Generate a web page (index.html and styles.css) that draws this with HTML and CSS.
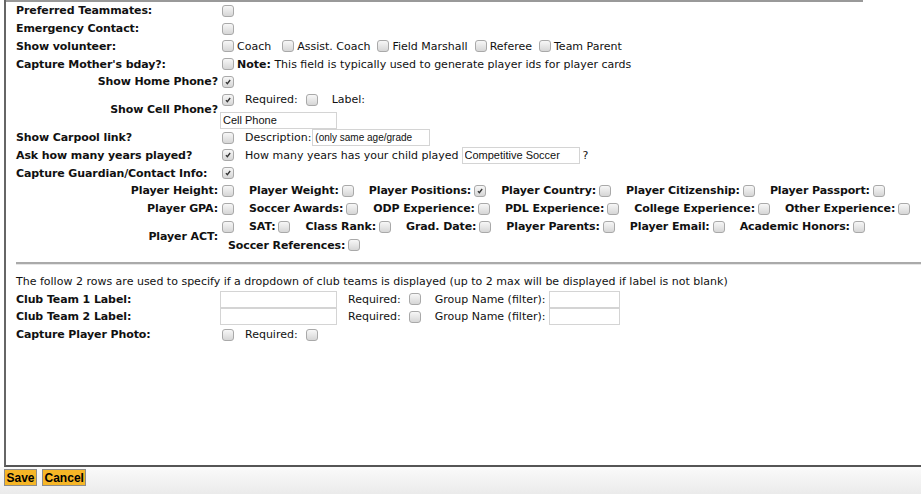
FILE: index.html
```html
<!DOCTYPE html>
<html lang="en">
<head>
    <meta charset="UTF-8">
    <title>Registration Options</title>
    <link rel="stylesheet" href="styles.css">
</head>
<body>
    <div class="panel">
        <div class="topline"></div>
        <div class="form">
            <div class="row">
                <div class="lbl">Preferred Teammates:</div>
                <div class="val"><span class="cb"></span></div>
            </div>
            <div class="row">
                <div class="lbl">Emergency Contact:</div>
                <div class="val"><span class="cb"></span></div>
            </div>
            <div class="row">
                <div class="lbl">Show volunteer:</div>
                <div class="val">
                    <span class="cb"></span><span class="txt">Coach</span>
                    <span class="cb gap-lg"></span><span class="txt">Assist. Coach</span>
                    <span class="cb gap"></span><span class="txt">Field Marshall</span>
                    <span class="cb gap"></span><span class="txt">Referee</span>
                    <span class="cb gap"></span><span class="txt">Team Parent</span>
                </div>
            </div>
            <div class="row">
                <div class="lbl">Capture Mother's bday?:</div>
                <div class="val"><span class="cb"></span><span class="txt"><b>Note:</b> This field is typically used to generate player ids for player cards</span></div>
            </div>
            <div class="row">
                <div class="lbl r">Show Home Phone?</div>
                <div class="val"><span class="cb on"><svg viewBox="0 0 12 12"><path d="M3.5 6.2 L5.2 8 L8.6 3.6" /></svg></span></div>
            </div>
            <div class="row cell-row">
                <div class="lbl r">Show Cell Phone?</div>
                <div class="val">
                    <div class="line">
                        <span class="cb on"><svg viewBox="0 0 12 12"><path d="M3.5 6.2 L5.2 8 L8.6 3.6" /></svg></span>
                        <span class="txt sp">Required:</span><span class="cb tight"></span>
                        <span class="txt wide">Label:</span>
                    </div>
                    <div class="line2"><input class="field" type="text" value="Cell Phone"></div>
                </div>
            </div>
            <div class="row">
                <div class="lbl">Show Carpool link?</div>
                <div class="val">
                    <span class="cb"></span><span class="txt sp">Description:</span><input class="field small" type="text" value="(only same age/grade">
                </div>
            </div>
            <div class="row">
                <div class="lbl">Ask how many years played?</div>
                <div class="val">
                    <span class="cb on"><svg viewBox="0 0 12 12"><path d="M3.5 6.2 L5.2 8 L8.6 3.6" /></svg></span>
                    <span class="txt sp">How many years has your child played</span><input class="field years" type="text" value="Competitive Soccer"><span class="q">?</span>
                </div>
            </div>
            <div class="row">
                <div class="lbl">Capture Guardian/Contact Info:</div>
                <div class="val"><span class="cb on"><svg viewBox="0 0 12 12"><path d="M3.5 6.2 L5.2 8 L8.6 3.6" /></svg></span></div>
            </div>
            <div class="row">
                <div class="lbl r">Player Height:</div>
                <div class="val">
                    <span class="cb"></span>
                    <span class="pf">Player Weight:<span class="cb"></span></span>
                    <span class="pf">Player Positions:<span class="cb on"><svg viewBox="0 0 12 12"><path d="M3.5 6.2 L5.2 8 L8.6 3.6" /></svg></span></span>
                    <span class="pf">Player Country:<span class="cb"></span></span>
                    <span class="pf">Player Citizenship:<span class="cb"></span></span>
                    <span class="pf">Player Passport:<span class="cb"></span></span>
                </div>
            </div>
            <div class="row">
                <div class="lbl r">Player GPA:</div>
                <div class="val">
                    <span class="cb"></span>
                    <span class="pf">Soccer Awards:<span class="cb"></span></span>
                    <span class="pf">ODP Experience:<span class="cb"></span></span>
                    <span class="pf">PDL Experience:<span class="cb"></span></span>
                    <span class="pf">College Experience:<span class="cb"></span></span>
                    <span class="pf">Other Experience:<span class="cb"></span></span>
                </div>
            </div>
            <div class="row act-row">
                <div class="lbl r">Player ACT:</div>
                <div class="val">
                    <div class="line">
                        <span class="cb"></span>
                        <span class="pf">SAT:<span class="cb"></span></span>
                        <span class="pf">Class Rank:<span class="cb"></span></span>
                        <span class="pf">Grad. Date:<span class="cb"></span></span>
                        <span class="pf">Player Parents:<span class="cb"></span></span>
                        <span class="pf">Player Email:<span class="cb"></span></span>
                        <span class="pf">Academic Honors:<span class="cb"></span></span>
                    </div>
                    <div class="line indent">
                        <span class="pf first">Soccer References:<span class="cb"></span></span>
                    </div>
                </div>
            </div>

            <div class="rule"></div>

            <div class="note">The follow 2 rows are used to specify if a dropdown of club teams is displayed (up to 2 max will be displayed if label is not blank)</div>
            <div class="row">
                <div class="lbl">Club Team 1 Label:</div>
                <div class="val">
                    <input class="field" type="text"><span class="txt sp">Required:</span><span class="cb tight"></span>
                    <span class="txt grp">Group Name (filter):</span><input class="field group" type="text">
                </div>
            </div>
            <div class="row">
                <div class="lbl">Club Team 2 Label:</div>
                <div class="val">
                    <input class="field" type="text"><span class="txt sp">Required:</span><span class="cb tight"></span>
                    <span class="txt grp">Group Name (filter):</span><input class="field group" type="text">
                </div>
            </div>
            <div class="row">
                <div class="lbl">Capture Player Photo:</div>
                <div class="val"><span class="cb"></span><span class="txt sp">Required:</span><span class="cb tight"></span></div>
            </div>
        </div>
    </div>
    <div class="actions">
        <button class="btn">Save</button>
        <button class="btn">Cancel</button>
    </div>
</body>
</html>
```

FILE: styles.css
```css
body {
    margin: 0;
    height: 494px;
    overflow: hidden;
    font-family: "DejaVu Sans", Verdana, sans-serif;
    font-size: 11px;
    color: #111;
    background-color: #fff;
}

.panel {
    margin-left: 4px;
    height: 467px;
    box-sizing: border-box;
    border-left: 2px solid #666;
    border-bottom: 2px solid #555;
}

.topline {
    width: 857px;
    height: 2px;
    background-color: #999;
}

.form {
    padding-left: 10px;
}

.row {
    display: grid;
    grid-template-columns: 204px 1fr;
    align-items: center;
    height: 17.75px;
    white-space: nowrap;
}

.lbl {
    font-weight: bold;
    letter-spacing: -0.1px;
}

.lbl.r {
    text-align: right;
    padding-right: 2px;
}

.val {
    display: flex;
    align-items: center;
}

.cb {
    display: inline-block;
    flex: none;
    width: 12px;
    height: 12px;
    box-sizing: border-box;
    margin-left: 2px;
    border: 1px solid #a9a9a9;
    border-radius: 3px;
    background: linear-gradient(#f7f7f7, #d6d6d6);
}

.cb svg {
    display: block;
    width: 10px;
    height: 10px;
}

.cb path {
    fill: none;
    stroke: #333;
    stroke-width: 1.6;
}

.cb.gap-lg {
    margin-left: 11px;
}

.cb.gap {
    margin-left: 7px;
}

.cb.tight {
    margin-left: 8px;
}

.txt {
    margin-left: 3px;
}

.txt.sp {
    margin-left: 11px;
}

.txt.wide {
    margin-left: 14px;
}

.txt.grp {
    margin-left: 14px;
}

.cell-row {
    height: 38px;
}

.cell-row .val {
    flex-direction: column;
    align-items: flex-start;
}

.line {
    display: flex;
    align-items: center;
    height: 18px;
}

.line2 {
    height: 20px;
    padding-top: 3px;
    box-sizing: border-box;
}

.field {
    width: 117px;
    height: 17px;
    box-sizing: border-box;
    margin: 0;
    padding: 0 2px;
    border: 1px solid #d4d4d4;
    font-family: "Liberation Sans", Arial, sans-serif;
    font-size: 11px;
    color: #111;
    background-color: #fff;
}

.field.small {
    width: 118px;
    margin-left: 1px;
    font-size: 10px;
}

.field.years {
    width: 118px;
    margin-left: 3px;
}

.field.group {
    width: 71px;
    margin-left: 4px;
}

.q {
    margin-left: 3px;
}

.pf {
    display: inline-flex;
    align-items: center;
    margin-left: 15px;
    font-weight: bold;
    letter-spacing: -0.1px;
}

.pf .cb {
    margin-left: 3px;
}

.act-row {
    height: 37px;
}

.act-row .val {
    flex-direction: column;
    align-items: flex-start;
}

.act-row .line {
    height: 18.5px;
}

.indent .pf.first {
    margin-left: 8px;
}

.rule {
    height: 2px;
    margin: 7px 0 8px 0;
    background-color: #aaa;
    border-bottom: 1px solid #e6e6e6;
}

.note {
    height: 17.75px;
    line-height: 17.75px;
    white-space: nowrap;
}

.actions {
    display: flex;
    gap: 5px;
    height: 27px;
    padding: 2px 4px 0 4px;
    box-sizing: border-box;
    background: linear-gradient(#fafafa, #ebebeb);
}

.btn {
    height: 17px;
    margin: 0;
    padding: 0 1.5px;
    border: 1px solid #8c8c8c;
    background-color: #f6b627;
    font-family: "Liberation Sans", Arial, sans-serif;
    font-size: 12px;
    font-weight: bold;
    color: #000;
    cursor: pointer;
}
```
